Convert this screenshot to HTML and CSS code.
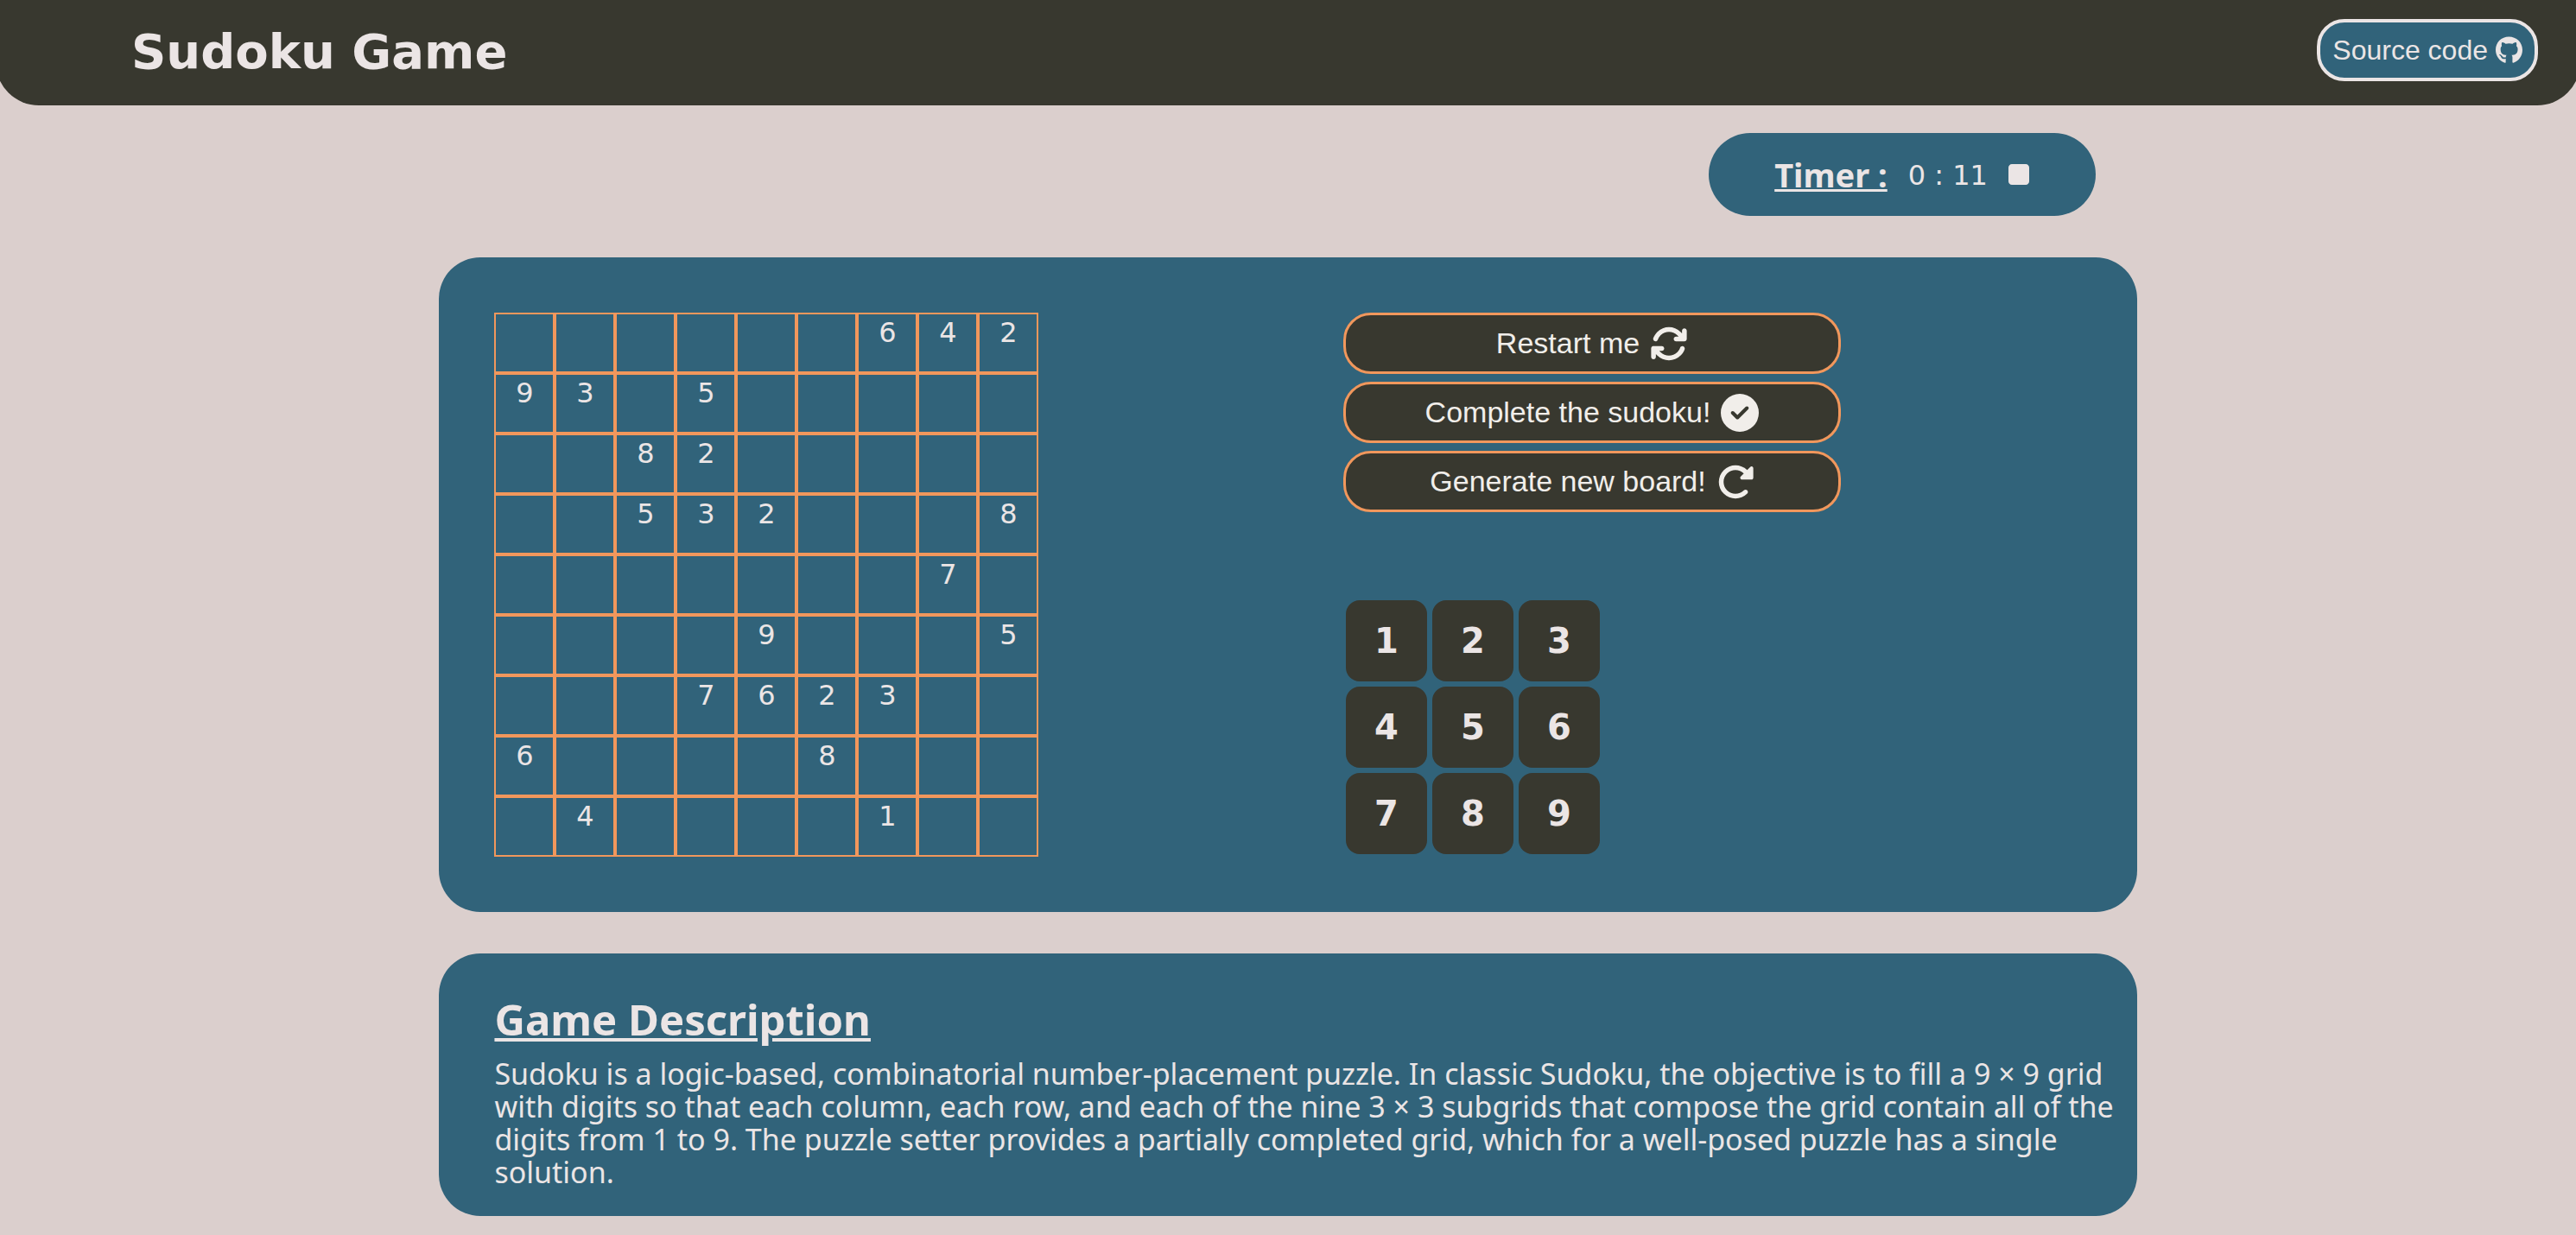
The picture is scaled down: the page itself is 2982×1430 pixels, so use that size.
FILE: index.html
```html
<!DOCTYPE html>
<html lang="en">
<head>
  <meta charset="utf-8">
  <meta name="viewport" content="width=device-width, initial-scale=1">
  <title>Sudoku Game</title>
  <link rel="stylesheet" href="styles.css">
</head>
<body>
  <header class="header">
    <h1 class="header-title">Sudoku Game</h1>
    <button class="source-button" type="button">
      Source code
      <svg class="icon icon-small" viewBox="0 0 496 512" aria-hidden="true"><path d="M165.900 397.400c0 2-2.300 3.600-5.200 3.600-3.300.3-5.600-1.300-5.600-3.600 0-2 2.300-3.600 5.200-3.600 3-.3 5.600 1.300 5.600 3.600zm-31.100-4.500c-.7 2 1.300 4.300 4.300 4.900 2.600 1 5.600 0 6.200-2s-1.300-4.300-4.300-5.200c-2.600-.7-5.500.3-6.200 2.300zm44.200-1.700c-2.900.7-4.900 2.600-4.600 4.900.3 2 2.900 3.300 5.900 2.600 2.900-.7 4.900-2.600 4.600-4.600-.3-1.900-3-3.200-5.900-2.900zM244.800 8C106.100 8 0 113.300 0 252c0 110.900 69.800 205.800 169.500 239.200 12.800 2.300 17.300-5.600 17.300-12.100 0-6.200-.3-40.400-.3-61.400 0 0-70 15-84.700-29.800 0 0-11.400-29.100-27.800-36.600 0 0-22.900-15.700 1.600-15.400 0 0 24.900 2 38.600 25.800 21.900 38.600 58.600 27.500 72.900 20.900 2.300-16 8.800-27.100 16-33.700-55.900-6.200-112.300-14.300-112.300-110.500 0-27.500 7.600-41.300 23.600-58.900-2.600-6.500-11.100-33.300 2.600-67.900 20.900-6.500 69 27 69 27 20-5.600 41.500-8.500 62.800-8.500s42.800 2.900 62.800 8.500c0 0 48.100-33.600 69-27 13.700 34.700 5.200 61.400 2.600 67.900 16 17.700 25.800 31.500 25.800 58.900 0 96.500-58.900 104.200-114.800 110.500 9.200 7.900 17 22.900 17 46.400 0 33.700-.3 75.400-.3 83.600 0 6.500 4.600 14.400 17.300 12.100C428.200 457.800 496 362.900 496 252 496 113.300 383.500 8 244.800 8z"/></svg>
    </button>
  </header>

  <main class="content">
    <section class="timer">
      <h2 class="timer-label">Timer :</h2>
      <span class="timer-value">0 : 11</span>
      <button class="timer-stop" type="button" aria-label="Stop timer">
        <svg class="icon icon-small" viewBox="0 0 384 512" aria-hidden="true"><path d="M0 128C0 92.700 28.700 64 64 64H320c35.300 0 64 28.700 64 64V384c0 35.300-28.700 64-64 64H64c-35.300 0-64-28.700-64-64V128z"/></svg>
      </button>
    </section>

    <section class="panel game">
      <div class="game-half">
        <table class="board" aria-label="Sudoku board">
          <tbody>
            <tr><td></td><td></td><td></td><td></td><td></td><td></td><td>6</td><td>4</td><td>2</td></tr>
            <tr><td>9</td><td>3</td><td></td><td>5</td><td></td><td></td><td></td><td></td><td></td></tr>
            <tr><td></td><td></td><td>8</td><td>2</td><td></td><td></td><td></td><td></td><td></td></tr>
            <tr><td></td><td></td><td>5</td><td>3</td><td>2</td><td></td><td></td><td></td><td>8</td></tr>
            <tr><td></td><td></td><td></td><td></td><td></td><td></td><td></td><td>7</td><td></td></tr>
            <tr><td></td><td></td><td></td><td></td><td>9</td><td></td><td></td><td></td><td>5</td></tr>
            <tr><td></td><td></td><td></td><td>7</td><td>6</td><td>2</td><td>3</td><td></td><td></td></tr>
            <tr><td>6</td><td></td><td></td><td></td><td></td><td>8</td><td></td><td></td><td></td></tr>
            <tr><td></td><td>4</td><td></td><td></td><td></td><td></td><td>1</td><td></td><td></td></tr>
          </tbody>
        </table>
      </div>

      <div class="game-half controls">
        <div class="actions">
          <button class="action" type="button">
            Restart me
            <svg class="icon" viewBox="0 0 512 512" aria-hidden="true"><path d="M105.100 202.600c7.700-21.800 20.200-42.300 37.800-59.800c62.500-62.500 163.800-62.500 226.300 0L386.300 160H352c-17.700 0-32 14.300-32 32s14.300 32 32 32H463.500h.4c17.700 0 32-14.300 32-32V80c0-17.700-14.300-32-32-32s-32 14.300-32 32v35.200L414.400 97.600c-87.500-87.500-229.300-87.500-316.800 0C73.200 122 55.600 150.700 44.800 181.400c-5.900 16.700 2.900 34.900 19.500 40.800s34.900-2.900 40.800-19.500zM39 289.300c-5 1.500-9.800 4.200-13.700 8.200c-4 4-6.700 8.800-8.100 14c-.3 1.200-.6 2.500-.8 3.800c-.3 1.700-.4 3.400-.4 5.100V432c0 17.700 14.300 32 32 32s32-14.300 32-32V396.900l17.600 17.500c87.500 87.400 229.300 87.400 316.700 0c24.400-24.400 42.100-53.100 52.900-83.700c5.900-16.700-2.900-34.900-19.500-40.800s-34.900 2.900-40.800 19.500c-7.700 21.800-20.200 42.300-37.800 59.800c-62.500 62.500-163.800 62.500-226.300 0l-.1-.1L125.600 352H160c17.700 0 32-14.300 32-32s-14.300-32-32-32H48.400c-1.600 0-3.200 .1-4.800 .3s-3.100 .5-4.600 1z"/></svg>
          </button>
          <button class="action" type="button">
            Complete the sudoku!
            <svg class="icon" viewBox="0 0 512 512" aria-hidden="true"><path d="M256 512A256 256 0 1 0 256 0a256 256 0 1 0 0 512zM369 209L241 337c-9.400 9.400-24.600 9.400-33.900 0l-64-64c-9.400-9.400-9.400-24.600 0-33.900s24.600-9.400 33.900 0l47 47L335 175c9.400-9.400 24.600-9.400 33.900 0s9.400 24.600 0 33.900z"/></svg>
          </button>
          <button class="action" type="button">
            Generate new board!
            <svg class="icon" viewBox="0 0 512 512" aria-hidden="true"><path d="M463.500 224H472c13.300 0 24-10.700 24-24V72c0-9.700-5.800-18.500-14.800-22.200s-19.300-1.700-26.200 5.200L413.400 96.600c-87.600-86.500-228.700-86.200-315.800 1c-87.500 87.500-87.500 229.300 0 316.800s229.300 87.500 316.800 0c12.500-12.500 12.500-32.800 0-45.300s-32.800-12.500-45.300 0c-62.500 62.500-163.800 62.500-226.300 0s-62.500-163.800 0-226.300c62.200-62.200 162.700-62.500 225.300-1L327 183c-6.900 6.900-8.900 17.200-5.200 26.200s12.500 14.800 22.200 14.800H463.500z"/></svg>
          </button>
        </div>

        <div class="keypad">
          <button class="key" type="button">1</button>
          <button class="key" type="button">2</button>
          <button class="key" type="button">3</button>
          <button class="key" type="button">4</button>
          <button class="key" type="button">5</button>
          <button class="key" type="button">6</button>
          <button class="key" type="button">7</button>
          <button class="key" type="button">8</button>
          <button class="key" type="button">9</button>
        </div>
      </div>
    </section>

    <section class="panel description">
      <h2 class="description-title">Game Description</h2>
      <p class="description-text">Sudoku is a logic-based, combinatorial number-placement puzzle. In classic Sudoku, the objective is to fill a 9 × 9 grid with digits so that each column, each row, and each of the nine 3 × 3 subgrids that compose the grid contain all of the digits from 1 to 9. The puzzle setter provides a partially completed grid, which for a well-posed puzzle has a single solution.</p>
    </section>
  </main>
</body>
</html>
```
FILE: styles.css
```css
:root {
  --page: #dbcfcd;
  --dark: #38382f;
  --blue: #31637a;
  --orange: #f1975c;
  --light: #ebe5e5;
  --cream: #f1eeea;
  --text-font: "Lucida Grande", "Noto Sans", sans-serif;
  --digit-font: "DejaVu Sans", Verdana, sans-serif;
  --button-font: "Liberation Sans", Arial, sans-serif;
}

* {
  box-sizing: border-box;
}

body {
  margin: 0;
  overflow-x: hidden;
  background: var(--page);
  color: var(--light);
  font-family: var(--text-font);
  font-size: 34px;
  line-height: 38px;
}

h1,
h2,
p {
  margin: 0;
}

button {
  padding: 0;
  border: 0;
  color: inherit;
  cursor: pointer;
}

.icon {
  height: 44px;
  fill: currentColor;
}

.icon-small {
  height: 32px;
}

.header {
  display: flex;
  align-items: flex-start;
  justify-content: space-between;
  margin: 0 -5px;
  padding: 22px 49px 24px 157px;
  border-radius: 0 0 50px 50px;
  background: var(--dark);
}

.header-title {
  font-family: var(--digit-font);
  font-size: 56px;
  line-height: 76px;
}

.source-button {
  display: flex;
  align-items: center;
  gap: 9px;
  height: 72px;
  padding: 0 14px;
  border: 4px solid var(--light);
  border-radius: 32px;
  background: var(--blue);
  font-family: var(--button-font);
  font-size: 32px;
}

.content {
  display: flex;
  flex-direction: column;
  gap: 48px;
  width: 65.9%;
  margin: 32px auto 22px;
}

.timer {
  display: flex;
  align-items: center;
  justify-content: center;
  align-self: flex-end;
  gap: 24px;
  width: 448px;
  height: 96px;
  margin-right: 48px;
  border-radius: 48px;
  background: var(--blue);
}

.timer-label {
  font-size: 38px;
  text-decoration: underline;
}

.timer-value {
  padding-top: 2px;
  font-family: var(--digit-font);
  font-size: 32px;
}

.timer-stop {
  display: flex;
  background: none;
}

.panel {
  border-radius: 48px;
  background: var(--blue);
}

.game {
  display: grid;
  grid-template-columns: 1fr 1fr;
}

.game-half {
  padding: 64px;
}

.board {
  border-spacing: 0;
  table-layout: fixed;
  width: 630px;
}

.board td {
  height: 70px;
  padding: 2px 0 0;
  border: 2px solid var(--orange);
  font-family: var(--digit-font);
  font-size: 32px;
  text-align: center;
  vertical-align: top;
}

.controls {
  display: flex;
  flex-direction: column;
  justify-content: space-between;
}

.actions {
  display: grid;
  gap: 9px;
  width: 576px;
}

.action {
  display: flex;
  align-items: center;
  justify-content: center;
  gap: 12px;
  height: 71px;
  border: 3px solid var(--orange);
  border-radius: 32px;
  background: var(--dark);
  color: var(--cream);
  font-family: var(--button-font);
  font-size: 34px;
}

.keypad {
  display: grid;
  grid-template-columns: repeat(3, 94px);
  gap: 6px;
  padding: 3px;
}

.key {
  height: 94px;
  border-radius: 16px;
  background: var(--dark);
  font-family: var(--digit-font);
  font-size: 40px;
  font-weight: bold;
}

.description {
  padding: 44px 24px 32px 64px;
}

.description-title {
  margin-bottom: 12px;
  font-size: 49px;
  line-height: 64px;
  text-decoration: underline;
}
```
